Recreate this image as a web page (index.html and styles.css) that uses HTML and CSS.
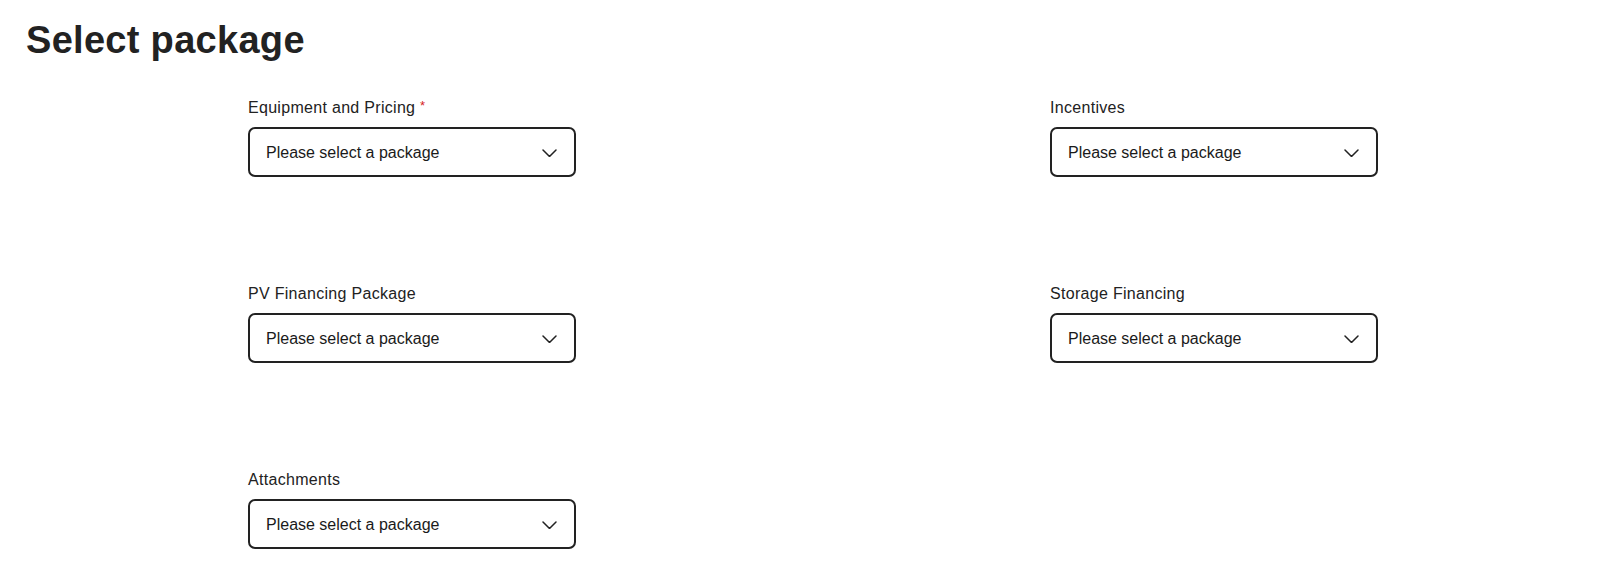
FILE: index.html
```html
<!DOCTYPE html>
<html lang="en">
<head>
<meta charset="utf-8">
<title>Select package</title>
<link rel="stylesheet" href="styles.css">
</head>
<body>
<h1 class="title">Select package</h1>
<form class="form-grid">
  <div class="field">
    <label class="label">Equipment and Pricing <span class="req">*</span></label>
    <div class="select"><span class="placeholder">Please select a package</span><svg class="chev" width="15" height="8" viewBox="0 0 15 8"><path d="M1 1l6.5 6.5 6.5-6.5" fill="none" stroke="#222" stroke-width="1.5" stroke-linecap="round" stroke-linejoin="round"/></svg></div>
  </div>
  <div class="field">
    <label class="label">Incentives</label>
    <div class="select"><span class="placeholder">Please select a package</span><svg class="chev" width="15" height="8" viewBox="0 0 15 8"><path d="M1 1l6.5 6.5 6.5-6.5" fill="none" stroke="#222" stroke-width="1.5" stroke-linecap="round" stroke-linejoin="round"/></svg></div>
  </div>
  <div class="field">
    <label class="label">PV Financing Package</label>
    <div class="select"><span class="placeholder">Please select a package</span><svg class="chev" width="15" height="8" viewBox="0 0 15 8"><path d="M1 1l6.5 6.5 6.5-6.5" fill="none" stroke="#222" stroke-width="1.5" stroke-linecap="round" stroke-linejoin="round"/></svg></div>
  </div>
  <div class="field">
    <label class="label">Storage Financing</label>
    <div class="select"><span class="placeholder">Please select a package</span><svg class="chev" width="15" height="8" viewBox="0 0 15 8"><path d="M1 1l6.5 6.5 6.5-6.5" fill="none" stroke="#222" stroke-width="1.5" stroke-linecap="round" stroke-linejoin="round"/></svg></div>
  </div>
  <div class="field">
    <label class="label">Attachments</label>
    <div class="select"><span class="placeholder">Please select a package</span><svg class="chev" width="15" height="8" viewBox="0 0 15 8"><path d="M1 1l6.5 6.5 6.5-6.5" fill="none" stroke="#222" stroke-width="1.5" stroke-linecap="round" stroke-linejoin="round"/></svg></div>
  </div>
</form>
</body>
</html>
```
FILE: styles.css
```css
* { box-sizing: border-box; }
html, body { background: #fff; }
body {
  margin: 0;
  font-family: "Liberation Sans", Arial, sans-serif;
  color: #222;
}
.title {
  margin: 0;
  padding: 18px 0 0 26px;
  font-size: 38px;
  line-height: 44px;
  letter-spacing: 0.3px;
  font-weight: 700;
  color: #222;
}
.form-grid {
  margin: 36px 0 0 248px;
  display: grid;
  grid-template-columns: 802px 328px;
  row-gap: 107px;
}
.field {
  display: flex;
  flex-direction: column;
  gap: 9px;
}
.label {
  font-size: 16px;
  line-height: 20px;
  letter-spacing: 0.3px;
  color: #222;
}
.req {
  color: #d62222;
  font-size: 13px;
  vertical-align: top;
  line-height: 16px;
}
.select {
  width: 328px;
  height: 50px;
  border: 2px solid #222;
  border-radius: 7px;
  display: flex;
  align-items: center;
  justify-content: space-between;
  padding: 1px 17px 0 16px;
}
.placeholder {
  font-size: 16px;
  line-height: 20px;
  color: #1a1a1a;
}
.chev { display: block; }
```
